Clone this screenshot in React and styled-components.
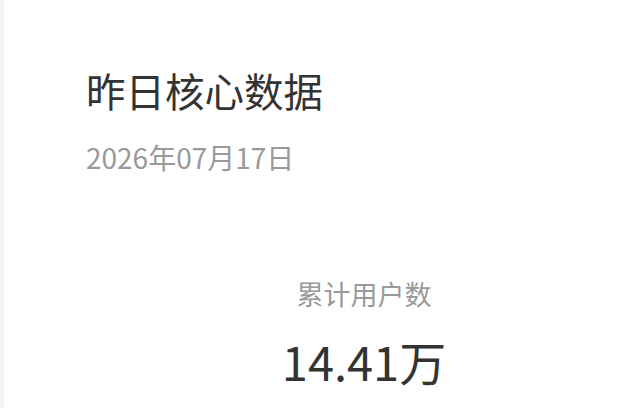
import React from 'react';
import styled, { createGlobalStyle } from 'styled-components';

const GlobalStyle = createGlobalStyle`
  html, body {
    margin: 0;
    padding: 0;
    background: #ffffff;
    font-family: "Noto Sans CJK SC", "Noto Sans", sans-serif;
  }
`;

const Page = styled.div`
  display: flex;
  width: 622px;
  height: 408px;
  overflow: hidden;
  background: #ffffff;
`;

const SideStrip = styled.div`
  width: 4px;
  flex-shrink: 0;
  background: #f3f3f5;
`;

const Card = styled.div`
  flex: 1;
  display: flex;
  flex-direction: column;
  padding: 64px 0 0 82px;
`;

const Title = styled.h1`
  margin: 0;
  font-size: 39.5px;
  font-weight: 400;
  line-height: 52px;
  color: #333333;
`;

const DateText = styled.div`
  margin-top: 23px;
  font-size: 28px;
  line-height: 36px;
  color: #999999;
`;

const StatsRow = styled.div`
  display: flex;
  margin-top: 100px;
  margin-left: 178px;
`;

const Stat = styled.div`
  width: 200px;
  display: flex;
  flex-direction: column;
  align-items: center;
`;

const StatLabel = styled.div`
  font-size: 27px;
  line-height: 38px;
  color: #999999;
`;

const StatValue = styled.div`
  margin-top: 18px;
  font-size: 47px;
  line-height: 60px;
  color: #333333;
`;

const App = () => {
  return (
    <Page>
      <GlobalStyle />
      <SideStrip />
      <Card>
        <Title>昨日核心数据</Title>
        <DateText>2026年07月17日</DateText>
        <StatsRow>
          <Stat>
            <StatLabel>累计用户数</StatLabel>
            <StatValue>14.41万</StatValue>
          </Stat>
        </StatsRow>
      </Card>
    </Page>
  );
};

export default App;
